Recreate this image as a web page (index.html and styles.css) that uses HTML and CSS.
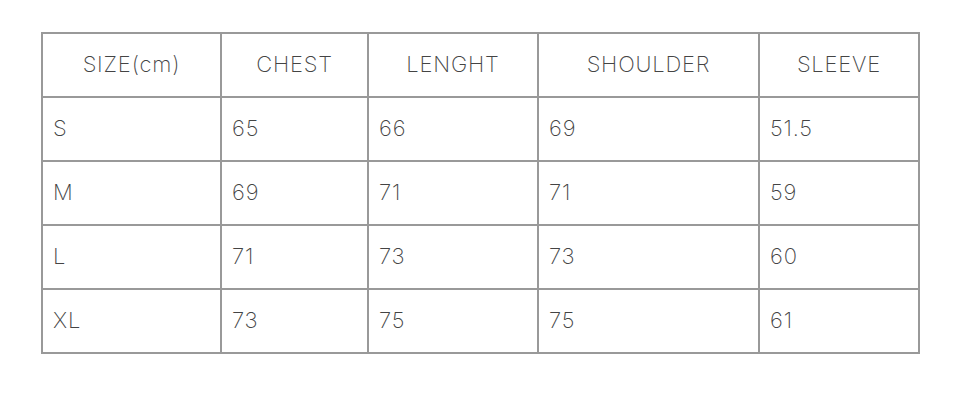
FILE: index.html
```html
<!DOCTYPE html>
<html>
<head>
<meta charset="utf-8">
<link rel="stylesheet" href="styles.css">
</head>
<body>
<table class="size-table">
  <colgroup>
    <col class="c1"><col class="c2"><col class="c3"><col class="c4"><col class="c5">
  </colgroup>
  <thead>
    <tr><th>SIZE(cm)</th><th>CHEST</th><th>LENGHT</th><th>SHOULDER</th><th>SLEEVE</th></tr>
  </thead>
  <tbody>
    <tr><td>S</td><td>65</td><td>66</td><td>69</td><td>51.5</td></tr>
    <tr><td>M</td><td>69</td><td>71</td><td>71</td><td>59</td></tr>
    <tr><td>L</td><td>71</td><td>73</td><td>73</td><td>60</td></tr>
    <tr><td>XL</td><td>73</td><td>75</td><td>75</td><td>61</td></tr>
  </tbody>
</table>
</body>
</html>
```
FILE: styles.css
```css
html, body {
  margin: 0;
  padding: 0;
  background: #fff;
}
body {
  padding: 32px 0 0 41px;
  font-family: Inter, "Noto Sans CJK KR", sans-serif;
  font-weight: 200;
  color: #444;
}
.size-table {
  border-collapse: collapse;
  table-layout: fixed;
  width: 879px;
}
.c1 { width: 179px; }
.c2 { width: 147px; }
.c3 { width: 170px; }
.c4 { width: 221px; }
.c5 { width: 160px; }
.size-table th,
.size-table td {
  border: 2px solid #999;
  height: 64px;
  padding: 0 10px 2px;
  font-size: 22px;
  font-weight: 200;
  letter-spacing: 0.8px;
  line-height: 26px;
  box-sizing: border-box;
}
.size-table th {
  text-align: center;
}
.size-table td {
  text-align: left;
}
```
